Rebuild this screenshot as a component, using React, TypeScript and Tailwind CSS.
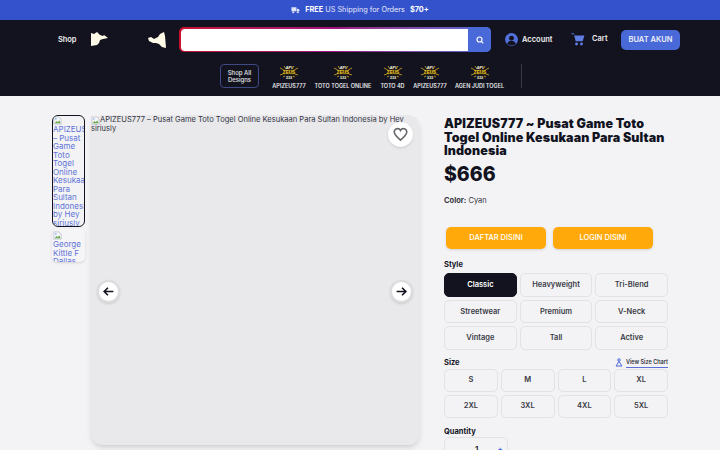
import React from "react";

const BrokenImg = () => (
  <svg width="9" height="9" viewBox="0 0 16 16" className="block">
    <path d="M1.500 1.500h9l4 4v9h-13z" fill="#f4f5f7" stroke="#a9adb5" />
    <path d="M3 13l3-4 2.500 2L11 8l2 3v2z" fill="#6aa84f" />
    <circle cx="5" cy="5" r="1.500" fill="#8ab4f8" />
  </svg>
);

const ZeusLogo = () => (
  <svg width="18" height="15" viewBox="0 0 18 15" fontFamily="'Liberation Sans',sans-serif" fontWeight="700" textAnchor="middle">
    <path d="M0 3l4 2M18 3l-4 2M0 10l3-1M18 10l-3-1M3 12l2-1M15 12l-2-1M4 1l2 3M14 1l-2 3" stroke="#d9ac20" strokeWidth="0.800" />
    <text x="9" y="3.800" fontSize="4" fill="#f4f0d8">API</text>
    <rect x="3" y="4.500" width="12" height="5" fill="#3a2f0c" />
    <text x="9" y="8.800" fontSize="4.600" fill="#f0c62e">ZEUS</text>
    <text x="9" y="14" fontSize="4" fill="#f4f0d8">333</text>
  </svg>
);

const NavItem = ({ label, w }: { label: string; w: string }) => (
  <div className={`flex flex-col items-center gap-[2px] pt-[1px] ${w}`}>
    <ZeusLogo />
    <span className="whitespace-nowrap text-[5.500px] font-semibold leading-[9px] text-[#e6e7ea]">{label}</span>
  </div>
);

const Opt = ({ label, active, h }: { label: string; active?: boolean; h: string }) => (
  <div
    className={`flex ${h} items-center justify-center rounded-[5px] border-[1.5px] text-[7.500px] font-semibold ${
      active ? "border-[#12131f] bg-[#12131f] text-white" : "border-[#e2e2e5] text-[#3a3b46]"
    }`}
  >
    {label}
  </div>
);

const Arrow = ({ dir }: { dir: "l" | "r" }) => (
  <div className="flex h-[23px] w-[23px] items-center justify-center rounded-full border-2 border-[#dcdcdf] bg-white shadow-sm">
    <svg width="13" height="13" viewBox="0 0 24 24" fill="none" stroke="#12131f" strokeWidth="3" className={dir === "r" ? "rotate-180" : ""}>
      <path d="M21 12H5M11 5l-7 7 7 7" />
    </svg>
  </div>
);

export default function App() {
  return (
    <div className="h-[450px] w-[720px] overflow-hidden bg-[#f3f3f5] font-['Inter',sans-serif]">
      <div className="flex h-[20px] items-center justify-center gap-[4px] bg-[#3452cc] text-[7.300px] text-[#e8ebfa]">
        <svg width="9" height="8" viewBox="0 0 20 16" fill="#dfe4f8" className="mr-[1px]">
          <path d="M1 2h11v9H1zM13 5h3l3 3v3h-6z" />
          <circle cx="5" cy="13" r="2.400" />
          <circle cx="15" cy="13" r="2.400" />
        </svg>
        <span><b className="font-bold text-white">FREE</b> US Shipping for Orders</span>
        <b className="ml-[1px] font-bold text-white">$70+</b>
      </div>

      <header className="h-[76px] bg-[#12131f]">
        <div className="flex h-[39px] items-center pl-[58px]">
          <span className="w-[33px] text-[7.400px] font-semibold text-[#eeeef0]">Shop</span>
          <svg width="18" height="15" viewBox="0 0 18 15" fill="#fffbe8">
            <path d="M0 1l3 1 3-2 3 3 3 1 1-1 4 3-5 1-3 1-1 3-2 2-6 1z" />
          </svg>
          <svg width="18" height="16" viewBox="0 0 18 16" fill="#fffbe8" className="ml-[39px]">
            <path d="M16 0l1 4 1 12-4-1-3-3-3-1H5L1 9 0 6l3-1 3 2 4-2 2-3z" />
          </svg>
          <div className="ml-[13px] flex h-[25px] w-[312px] overflow-hidden rounded-[5px] bg-gradient-to-r from-[#c8102e] via-[#a01080] to-[#4a69d8] py-[1.500px] pl-[1.500px]">
            <div className="flex-1 rounded-l-[4px] bg-white" />
            <div className="-my-[1.500px] flex w-[23px] items-center justify-center bg-[#4a69d8]">
              <svg width="8" height="8" viewBox="0 0 24 24" fill="none" stroke="#fff" strokeWidth="3.500">
                <circle cx="10.500" cy="10.500" r="7.500" />
                <path d="M16 16l6 6" />
              </svg>
            </div>
          </div>
          <svg width="13" height="13" viewBox="0 0 24 24" className="ml-[14px]">
            <circle cx="12" cy="12" r="12" fill="#5170dc" />
            <circle cx="12" cy="9.500" r="4.500" fill="#12131f" />
            <path d="M4 20c1.500-4 4.500-5.500 8-5.500s6.500 1.500 8 5.500c-2 2-5 3-8 3s-6-1-8-3z" fill="#12131f" />
          </svg>
          <span className="ml-[4px] w-[31px] whitespace-nowrap text-[7.500px] font-semibold text-[#eeeef0]">Account</span>
          <svg width="14" height="14" viewBox="0 0 24 24" fill="#5f7de4" className="ml-[18px] -translate-y-[1px]">
            <path d="M1 2h4l1 4h17l-3 10H8L5 4H1z" />
            <circle cx="9.500" cy="20.500" r="2.500" />
            <circle cx="18" cy="20.500" r="2.500" />
          </svg>
          <span className="ml-[7px] w-[15px] -translate-y-[1px] text-[7.500px] font-semibold text-[#eeeef0]">Cart</span>
          <div className="ml-[14px] flex h-[20px] w-[59px] items-center justify-center rounded-[5px] bg-[#4a69d8] text-[7.500px] font-semibold text-[#eef0fb]">
            BUAT AKUN
          </div>
        </div>

        <div className="flex items-start pl-[220px] pt-[5px]">
          <div className="flex h-[24px] w-[39px] items-center justify-center rounded-[4px] border-[1.5px] border-[#3f4a84] text-center text-[6px] font-medium leading-[7px] text-[#e4e5ea]">
            Shop All<br />Designs
          </div>
          <div className="ml-[13px] flex gap-[8px]">
            <NavItem label="APIZEUS777" w="w-[34px]" />
            <NavItem label="TOTO TOGEL ONLINE" w="w-[58px]" />
            <NavItem label="TOTO 4D" w="w-[25px]" />
            <NavItem label="APIZEUS777" w="w-[34px]" />
            <NavItem label="AGEN JUDI TOGEL" w="w-[49px]" />
          </div>
          <div className="ml-[17px] h-[24px] w-px bg-[#3a3b46]" />
        </div>
      </header>

      <main className="flex pl-[52px] pt-[19px]">
        <div className="flex w-[33px] flex-col gap-[2px]">
          <div className="h-[112px] overflow-hidden rounded-[6px] border border-[#12131f] text-[8px] leading-[8.500px] text-[#5f73d8]">
            <BrokenImg />
            <div className="whitespace-pre-line">{"APIZEUS777\n– Pusat\nGame\nToto\nTogel\nOnline\nKesukaan\nPara\nSultan\nIndonesia\nby Hey\nsiriusly"}</div>
          </div>
          <div className="h-[33px] overflow-hidden rounded-[5px] bg-[#f5f5f7] pl-[1px] pt-[2px] text-[8px] leading-[8.500px] text-[#5f73d8] shadow-sm">
            <BrokenImg />
            <div className="whitespace-pre-line">{"George\nKittle F\nDallas"}</div>
          </div>
        </div>

        <div className="relative ml-[6px] h-[330px] w-[329px] rounded-xl bg-[#e9e9ec] shadow-md">
          <div className="flex pt-[1px] text-[7.550px] leading-[8.500px] text-[#33343f]">
            <span className="w-[9px] shrink-0"><BrokenImg /></span>
            <span className="whitespace-nowrap">APIZEUS777 – Pusat Game Toto Togel Online Kesukaan Para Sultan Indonesia by Hey</span>
          </div>
          <div className="text-[7.550px] leading-[8.500px] text-[#33343f]">siriusly</div>
          <div className="absolute right-[7px] top-[7px] flex h-[25px] w-[25px] items-center justify-center rounded-full bg-white shadow">
            <svg width="15" height="15" viewBox="0 0 24 24" fill="none" stroke="#66666d" strokeWidth="2.500">
              <path d="M12 21C5 15 2 12 2 8a5.300 5.300 0 0 1 10-2.500A5.300 5.300 0 0 1 22 8c0 4-3 7-10 13z" />
            </svg>
          </div>
          <div className="absolute left-[6px] top-[165px]"><Arrow dir="l" /></div>
          <div className="absolute right-[7px] top-[165px]"><Arrow dir="r" /></div>
        </div>

        <div className="ml-[24px] w-[224px] text-[#12131f]">
          <h1 className="mt-[2px] whitespace-nowrap text-[12.500px] font-black leading-[13.700px] tracking-[0.1px]">
            APIZEUS777 ~ Pusat Game Toto<br />Togel Online Kesukaan Para Sultan<br />Indonesia
          </h1>
          <div className="mt-[2px] text-[19.500px] font-extrabold leading-[28px]">$666</div>
          <div className="mt-[8px] text-[7.500px] leading-[10px] text-[#33343f]"><b className="font-bold">Color:</b> Cyan</div>
          <div className="ml-[2px] mt-[21px] flex gap-[7px]">
            <div className="flex h-[22px] w-[100px] items-center justify-center rounded-[5px] bg-[#ffaa0a] text-[7.500px] font-medium text-white shadow">DAFTAR DISINI</div>
            <div className="flex h-[22px] w-[100px] items-center justify-center rounded-[5px] bg-[#ffaa0a] text-[7.500px] font-medium text-white shadow">LOGIN DISINI</div>
          </div>
          <div className="mt-[11px] text-[7.500px] font-bold leading-[10px]">Style</div>
          <div className="mt-[3px] grid grid-cols-3 gap-x-[3px] gap-y-[3px]">
            {["Classic", "Heavyweight", "Tri-Blend", "Streetwear", "Premium", "V-Neck", "Vintage", "Tall", "Active"].map((s, i) => (
              <Opt key={s} label={s} active={i === 0} h="h-[23.500px]" />
            ))}
          </div>
          <div className="mt-[8px] flex items-center justify-between">
            <span className="text-[7.500px] font-bold leading-[10px]">Size</span>
            <span className="flex items-center gap-[3px] text-[5.500px] font-semibold leading-[8px] text-[#33343f]">
              <svg width="8" height="9" viewBox="0 0 16 18" fill="none" stroke="#4a69d8" strokeWidth="2">
                <circle cx="8" cy="4" r="2.500" />
                <path d="M8 7L2 16h12z" />
              </svg>
              <span className="border-b border-[#5a6fd8] pb-[1px]">View Size Chart</span>
            </span>
          </div>
          <div className="mt-[1px] grid grid-cols-4 gap-x-[3px] gap-y-[3px]">
            {["S", "M", "L", "XL", "2XL", "3XL", "4XL", "5XL"].map((s) => (
              <Opt key={s} label={s} h="h-[23px]" />
            ))}
          </div>
          <div className="mt-[9px] text-[7.500px] font-bold leading-[10px]">Quantity</div>
          <div className="flex h-[24px] w-[64px] items-start rounded-[5px] border-[1.5px] border-[#e2e2e5] pl-[30px] pt-[5px] text-[8px] font-semibold">
            <span>1</span>
            <span className="ml-[19px] text-[#4a69d8]">+</span>
          </div>
        </div>
      </main>
    </div>
  );
}
